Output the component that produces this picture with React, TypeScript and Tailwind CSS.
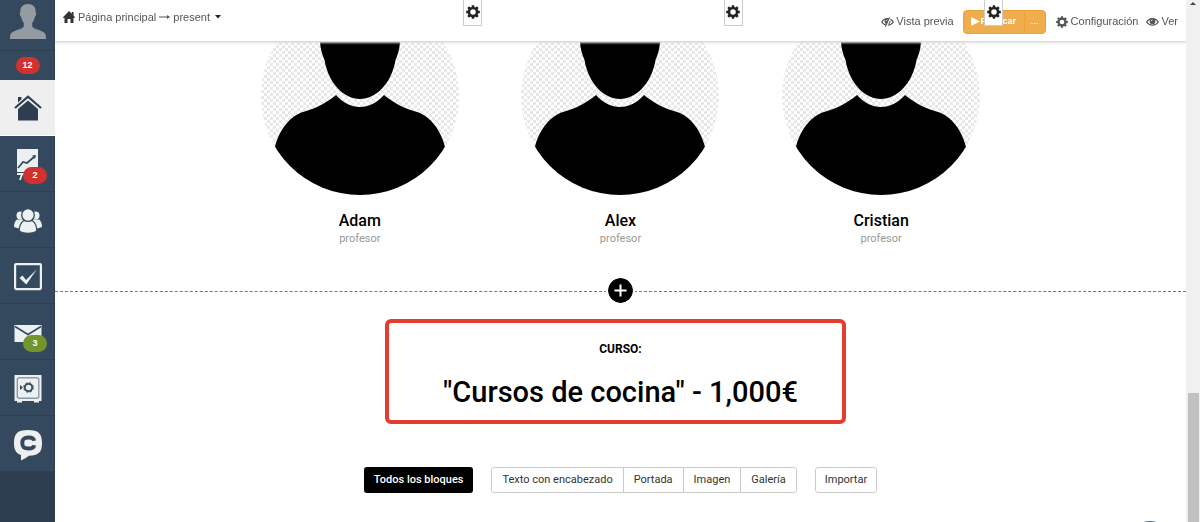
import type { ReactNode } from "react";

const TEACHERS = [
  { name: "Adam", role: "profesor" },
  { name: "Alex", role: "profesor" },
  { name: "Cristian", role: "profesor" },
];

const BLOCKS = ["Texto con encabezado", "Portada", "Imagen", "Galería"];

const TEETH = [0, 45, 90, 135, 180, 225, 270, 315];

function CogIcon({ className }: { className: string }) {
  return (
    <svg viewBox="0 0 14 14" className={className} aria-hidden="true">
      <circle cx="7" cy="7" r="4" fill="none" stroke="currentColor" strokeWidth="2.5" />
      {TEETH.map((angle) => (
        <path
          key={angle}
          d="M5.600 2.600 5.800 .2h2.400l.2 2.400z"
          fill="currentColor"
          transform={`rotate(${angle} 7 7)`}
        />
      ))}
    </svg>
  );
}

function EyeIcon({ closed = false }: { closed?: boolean }) {
  return (
    <svg viewBox="0 0 13 12" className="h-3 w-[13px]" aria-hidden="true">
      <path d="M.7 6C3.400 1.600 9.600 1.600 12.300 6 9.600 10.200 3.400 10.200.7 6z" fill="none" stroke="currentColor" strokeWidth="1.200" />
      <circle cx="6.500" cy="5.200" r="2.900" fill="currentColor" />
      <path d="M5.200 5.200c0-.9.6-1.400 1.300-1.400" fill="none" stroke="#fff" strokeWidth=".8" />
      {closed && (
        <>
          <path d="M9.600 1 5 11.500" stroke="#fff" strokeWidth="1.600" />
          <path d="M8.600 1.200 4.400 10.800" stroke="currentColor" strokeWidth="1" />
        </>
      )}
    </svg>
  );
}

function UserIcon() {
  return (
    <svg viewBox="0 0 36 36" className="h-9 w-9" aria-hidden="true">
      <path
        d="M18 0c5 0 8 3 7.600 8 1 .5.6 4-.8 5-.6 3-1.600 4.500-2.600 6v3.500c1 3 12.500 3.500 13.500 8.500.3 1.500.3 3 .3 4H0c0-1 0-2.500.3-4 1-5 12.500-5.500 13.500-8.500V19c-1-1.500-2-3-2.600-6-1.400-1-1.800-4.500-.8-5C10 3 13 0 18 0z"
        fill="#959ba2"
      />
    </svg>
  );
}

function HouseIcon() {
  return (
    <svg viewBox="0 0 28 26" className="h-[26px] w-7" aria-hidden="true">
      <path d="M4 2h3.500v2.300L4 7.500z" fill="#2c3e50" />
      <path d="M1 13 14 1.600 27 13" fill="none" stroke="#2c3e50" strokeWidth="2.200" />
      <path d="M14 5.500 24 14v11.500H4V14z" fill="#2c3e50" />
    </svg>
  );
}

function BoardIcon() {
  return (
    <svg viewBox="0 0 28 32" className="h-8 w-7" aria-hidden="true">
      <path d="M3 0h21v23H3z" fill="#ecf0f1" />
      <path d="M4 19l5-6 4 1 7-6" fill="none" stroke="#34495e" strokeWidth="1.700" />
      <path d="M18 6.500 22 6l-1 4z" fill="#34495e" />
      <path d="M3 25h12M8 25 6 31" stroke="#ecf0f1" strokeWidth="1.800" />
    </svg>
  );
}

function PeopleIcon() {
  return (
    <svg viewBox="0 0 28 26" className="h-[26px] w-7" fill="#ecf0f1" aria-hidden="true">
      <circle cx="6.500" cy="7.500" r="4" />
      <circle cx="21.500" cy="7.500" r="4" />
      <path d="M3 11.500h7L6.500 21 0 19c0-3.500 1-6 3-7.500zM25 11.500h-7L21.500 21l6.500-2c0-3.500-1-6-3-7.500z" />
      <g stroke="#34495e" strokeWidth="1.300">
        <path d="M10 12.500h8c3.500 2 4.800 6 4.800 10.700-5 2.800-12.600 2.800-17.600 0C5.200 18.500 6.500 14.500 10 12.500z" />
        <circle cx="14" cy="7" r="6.300" />
      </g>
    </svg>
  );
}

function CheckIcon() {
  return (
    <svg viewBox="0 0 28 28" className="h-7 w-7" aria-hidden="true">
      <rect x="1.100" y="1.100" width="25.800" height="25" rx="1" fill="none" stroke="#ecf0f1" strokeWidth="2.200" />
      <path d="M5.500 15 8.500 12.500 12 17 23 6 12.300 21.500z" fill="#ecf0f1" />
    </svg>
  );
}

function MailIcon() {
  return (
    <svg viewBox="0 0 28 18" className="h-[18px] w-7" aria-hidden="true">
      <path d="M.5 1h27v17H.5z" fill="#ecf0f1" />
      <path d="m1 2.500 13 8 13-8" fill="none" stroke="#34495e" strokeWidth="1.500" />
    </svg>
  );
}

function SafeIcon() {
  return (
    <svg viewBox="0 0 28 28" className="h-7 w-7" aria-hidden="true">
      <path d="M.5 0h27v26H25v1.500h-5V26H8v1.500H3V26H.5z" fill="#ecf0f1" />
      <rect x="3.300" y="2.800" width="21.500" height="20.500" rx="2" fill="none" stroke="#8d9aa6" strokeWidth="1.400" />
      <path d="M6 10l3 2.500L6 15z" fill="#34495e" />
      <circle cx="14.500" cy="12.500" r="3.700" fill="none" stroke="#34495e" strokeWidth="1.800" />
      <circle cx="14.500" cy="12.500" r="4.800" fill="none" stroke="#34495e" strokeWidth="1" strokeDasharray="2.200 1.570" />
    </svg>
  );
}

function ChatLogo() {
  return (
    <svg viewBox="0 0 28 31" className="h-[31px] w-7" aria-hidden="true">
      <path d="M14 0c10.500 0 14 3.500 14 13s-3.500 12.500-13 12.700C12 28 9.500 29 7 30.500V25C1.500 23 0 19 0 13 0 3.500 3.500 0 14 0z" fill="#efefef" />
      <path
        d="M20 10.800C19.700 8.300 17.800 7.600 14.500 7.600c-4.700 0-6.200 1.500-6.200 5.500s1.500 5.500 6.200 5.500c3.300 0 5.300-.7 5.600-3.300"
        fill="none"
        stroke="#34495e"
        strokeWidth="4"
      />
    </svg>
  );
}

function Badge({ children, green = false }: { children: ReactNode; green?: boolean }) {
  const color = green ? "bg-[#71972c]" : "bg-[#d2322d]";
  return (
    <span className={`flex h-[17px] w-6 items-center justify-center rounded-full text-[9px] font-bold text-white ${color}`}>
      {children}
    </span>
  );
}

const NAV = [
  { label: "Tráfico", icon: <BoardIcon />, badge: <Badge>2</Badge> },
  { label: "Usuarios", icon: <PeopleIcon /> },
  { label: "Tareas", icon: <CheckIcon /> },
  { label: "Mensajes", icon: <MailIcon />, badge: <Badge green>3</Badge> },
  { label: "Caja", icon: <SafeIcon /> },
  { label: "Chat", icon: <ChatLogo /> },
];

function Sidebar() {
  return (
    <nav className="flex w-[55px] shrink-0 flex-col border-r border-[#2c3e50] bg-[#2c3e50]">
      <a href="#perfil" aria-label="Perfil" className="flex h-[51px] justify-center border-b border-[#2c3e50] bg-[#34495e] pt-1 pl-px">
        <UserIcon />
      </a>
      <a href="#avisos" className="flex h-[29px] items-center justify-center bg-[#34495e] pl-px">
        <Badge>12</Badge>
      </a>
      <a href="#inicio" aria-label="Inicio" className="-mr-px flex h-14 items-center justify-center border-b border-white bg-[#efefef] pl-px">
        <HouseIcon />
      </a>
      {NAV.map((item) => (
        <a
          key={item.label}
          href="#menu"
          aria-label={item.label}
          className="relative flex h-14 items-center justify-center border-b border-[#2c3e50] bg-[#34495e] pt-[3px] pl-px"
        >
          {item.icon}
          {item.badge && <span className="absolute right-[7px] bottom-[7px]">{item.badge}</span>}
        </a>
      ))}
    </nav>
  );
}

function Header() {
  return (
    <header className="sticky top-0 z-10 flex h-[42px] shrink-0 justify-between border-b border-[#ddd] bg-white px-2 text-[11px] text-[#555] shadow-[0_1px_2px_#ddd]">
      <div className="flex h-[34px] items-center gap-[3px]">
        <svg viewBox="0 0 12 12" className="h-3 w-3 text-[#333]" fill="currentColor" aria-hidden="true">
          <path d="M6 0 8.800 2.800V1h1.700v3.500L12 6.200v.5h-1.500V12H7.500V8h-3v4h-3V6.700H0v-.5z" />
        </svg>
        <a href="#principal">Página principal</a>
        <svg viewBox="0 0 11 6" className="h-[6px] w-[11px]" aria-hidden="true">
          <path d="M0 3h9" stroke="currentColor" />
          <path d="M8 1l3 2-3 2z" fill="currentColor" />
        </svg>
        <button type="button" className="flex items-center gap-[5px]">
          present
          <svg viewBox="0 0 6 4" className="h-1 w-[6px] text-[#222]" fill="currentColor" aria-hidden="true">
            <path d="M0 0h6L3 3.500z" />
          </svg>
        </button>
      </div>
      <div className="flex h-[43px] items-center">
        <a href="#previa" className="flex items-center gap-[2px]">
          <EyeIcon closed />
          Vista previa
        </a>
        <div className="ml-[9px] flex h-6 rounded-sm border border-[#eea236] bg-[#f0ad4e] text-[9px] font-bold text-white">
          <button type="button" className="flex w-[61px] items-center gap-px border-r border-[#eea236] pl-[7px]">
            <svg viewBox="0 0 9 9" className="h-[9px] w-[9px]" fill="currentColor" aria-hidden="true">
              <path d="M0 0l9 4.500L0 9z" />
            </svg>
            Publicar
          </button>
          <button type="button" aria-label="Más opciones" className="w-5 font-normal">
            ...
          </button>
        </div>
        <a href="#config" className="ml-[10px] flex items-center gap-[3px]">
          <CogIcon className="h-3 w-3" />
          Configuración
        </a>
        <a href="#ver" className="ml-2 flex items-center gap-[2px]">
          <EyeIcon />
          Ver
        </a>
      </div>
    </header>
  );
}

function TeacherCard({ name, role }: { name: string; role: string }) {
  return (
    <article className="relative flex flex-col items-center">
      <div className="h-[198px] w-[198px] overflow-hidden rounded-full bg-[repeating-conic-gradient(#e8e8e8_0_25%,#fff_0_50%)] bg-[length:6px_6px]">
        <svg viewBox="0 0 198 198" role="img" aria-label={name}>
          <path d="M59 45C55 10 143 10 139 45c-.5 7-2 12-4.500 18-4 24-20 39-35.500 39S67.500 87 63.500 63C61 57 59.500 52 59 45z" />
          <path d="M14 150c4-17 15-31 28-35 13-3.500 23-9 33-17 14 16 34 16 48 0 10 8 20 13.500 33 17 13 4 24 18 28 35v48H14z" />
        </svg>
      </div>
      <h3 className="mt-4 font-[Roboto,sans-serif] text-base leading-5 font-medium text-black">{name}</h3>
      <p className="font-[Roboto,sans-serif] text-[11px] leading-4 text-[#999]">{role}</p>
      <button
        type="button"
        aria-label={`Ajustes de ${name}`}
        className="absolute top-[3px] right-2 z-20 flex h-[26px] w-[19px] justify-center border border-t-0 border-[#ccc] bg-white pt-[5px] text-[#222]"
      >
        <CogIcon className="h-[14px] w-[14px]" />
      </button>
    </article>
  );
}

function AddDivider() {
  return (
    <div className="relative mt-[31px] flex h-[25px] items-center justify-center">
      <span className="absolute inset-x-0 top-[13px] border-t border-dashed border-[#777]" />
      <button type="button" aria-label="Añadir bloque" className="relative h-[25px] w-[25px] rounded-full bg-black outline-2 outline-white">
        <svg viewBox="0 0 25 25" aria-hidden="true">
          <path d="M12.500 6.500v12M6.500 12.500h12" stroke="#fff" strokeWidth="2" />
        </svg>
      </button>
    </div>
  );
}

function CourseBlock() {
  return (
    <section className="relative mx-auto mt-4 w-[471px] max-w-full pt-5 pb-3 text-center font-[Roboto,sans-serif] text-black">
      <span className="absolute inset-y-0 right-[10px] left-0 rounded-md border-4 border-[#e53b32]" />
      <p className="text-xs leading-5 font-bold">CURSO:</p>
      <h2 className="mt-[13px] text-[29px] leading-10 font-medium">"Cursos de cocina" - 1,000€</h2>
    </section>
  );
}

function BlockToolbar() {
  return (
    <div className="mt-[43px] flex h-[26px] justify-center gap-[18px] font-[Roboto,sans-serif] text-[11px] text-[#333]">
      <button type="button" className="rounded-[3px] bg-black px-[10px] font-medium text-white">
        Todos los bloques
      </button>
      <div className="flex divide-x divide-[#ccc] rounded-[3px] border border-[#ccc]">
        {BLOCKS.map((block) => (
          <button key={block} type="button" className="px-[10px]">
            {block}
          </button>
        ))}
      </div>
      <button type="button" className="rounded-[3px] border border-[#ccc] px-[9px]">
        Importar
      </button>
    </div>
  );
}

function Scrollbar() {
  return (
    <div className="flex w-[14px] shrink-0 flex-col items-center bg-[#f0f0f0] pt-[2px]" aria-hidden="true">
      <svg viewBox="0 0 6 3" className="h-[3px] w-[6px]" fill="#444">
        <path d="M3 0l3 3H0z" />
      </svg>
      <div className="grow-[3]" />
      <div className="w-[11px] grow bg-[#c1c1c1]" />
    </div>
  );
}

export default function App() {
  return (
    <div className="flex h-screen overflow-hidden bg-white font-['Liberation_Sans',Arial,sans-serif]">
      <Sidebar />
      <main className="relative min-w-0 flex-1 overflow-hidden">
        <Header />
        <section className="mx-auto -mt-[45px] grid max-w-[782px] grid-cols-3">
          {TEACHERS.map((teacher) => (
            <TeacherCard key={teacher.name} {...teacher} />
          ))}
        </section>
        <AddDivider />
        <CourseBlock />
        <BlockToolbar />
        <button
          type="button"
          aria-label="Abrir chat"
          className="absolute right-4 -bottom-[39px] h-10 w-10 rounded-full bg-[#4d6b80] shadow-md"
        />
      </main>
      <Scrollbar />
    </div>
  );
}
